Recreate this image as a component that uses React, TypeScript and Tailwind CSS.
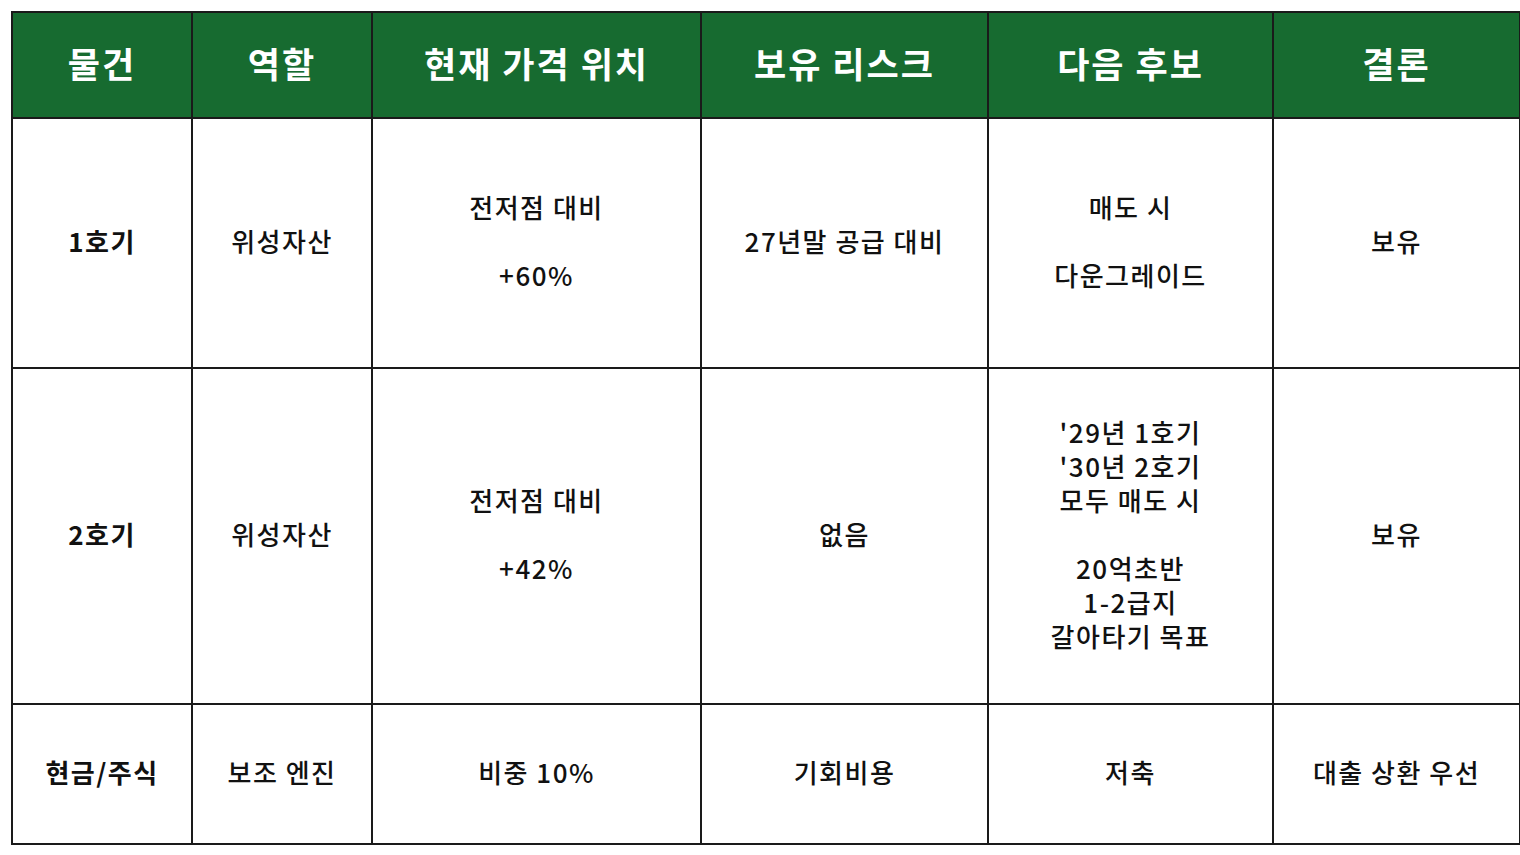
const font = {
  fontFamily: '"Noto Sans CJK KR", "Noto Sans", sans-serif',
};

type Row = {
  name: string;
  role: string;
  price: string[];
  risk: string[];
  next: string[];
  verdict: string;
  h: string;
};

const rows: Row[] = [
  {
    name: "1호기",
    role: "위성자산",
    price: ["전저점 대비", "", "+60%"],
    risk: ["27년말 공급 대비"],
    next: ["매도 시", "", "다운그레이드"],
    verdict: "보유",
    h: "h-[250px]",
  },
  {
    name: "2호기",
    role: "위성자산",
    price: ["전저점 대비", "", "+42%"],
    risk: ["없음"],
    next: ["'29년 1호기", "'30년 2호기", "모두 매도 시", "", "20억초반", "1-2급지", "갈아타기 목표"],
    verdict: "보유",
    h: "h-[336px]",
  },
  {
    name: "현금/주식",
    role: "보조 엔진",
    price: ["비중 10%"],
    risk: ["기회비용"],
    next: ["저축"],
    verdict: "대출 상환 우선",
    h: "h-[140px]",
  },
];

const headers = ["물건", "역할", "현재 가격 위치", "보유 리스크", "다음 후보", "결론"];
const widths = ["w-[180px]", "w-[180px]", "w-[329px]", "w-[287px]", "w-[285px]", "w-[247px]"];

function Lines({ lines }: { lines: string[] }) {
  return (
    <>
      {lines.map((l, i) => (
        <div key={i} className="h-[34px]">
          {l}
        </div>
      ))}
    </>
  );
}

const cell = "border-2 border-[#1a1a1a] pb-[5px]";

export default function App() {
  return (
    <div className="min-h-screen bg-white pl-[11px] pt-[11px]" style={font}>
      <table className="w-[1508px] table-fixed border-collapse border-2 border-[#444] text-center">
        <colgroup>
          {widths.map((w, i) => (
            <col key={i} className={w} />
          ))}
        </colgroup>
        <thead>
          <tr className="h-[106px] bg-[#176b30]">
            {headers.map((h) => (
              <th
                key={h}
                className="border-2 border-[#1a1a1a] pb-[4px] text-[35px] font-bold tracking-[2px] text-white"
              >
                {h}
              </th>
            ))}
          </tr>
        </thead>
        <tbody className="text-[26px] font-medium leading-[34px] tracking-[1.5px] text-[#111]">
          {rows.map((r) => (
            <tr key={r.name} className={r.h}>
              <td className={`${cell} font-bold`}>{r.name}</td>
              <td className={cell}>{r.role}</td>
              <td className={cell}>
                <Lines lines={r.price} />
              </td>
              <td className={cell}>
                <Lines lines={r.risk} />
              </td>
              <td className={cell}>
                <Lines lines={r.next} />
              </td>
              <td className={cell}>{r.verdict}</td>
            </tr>
          ))}
        </tbody>
      </table>
    </div>
  );
}
